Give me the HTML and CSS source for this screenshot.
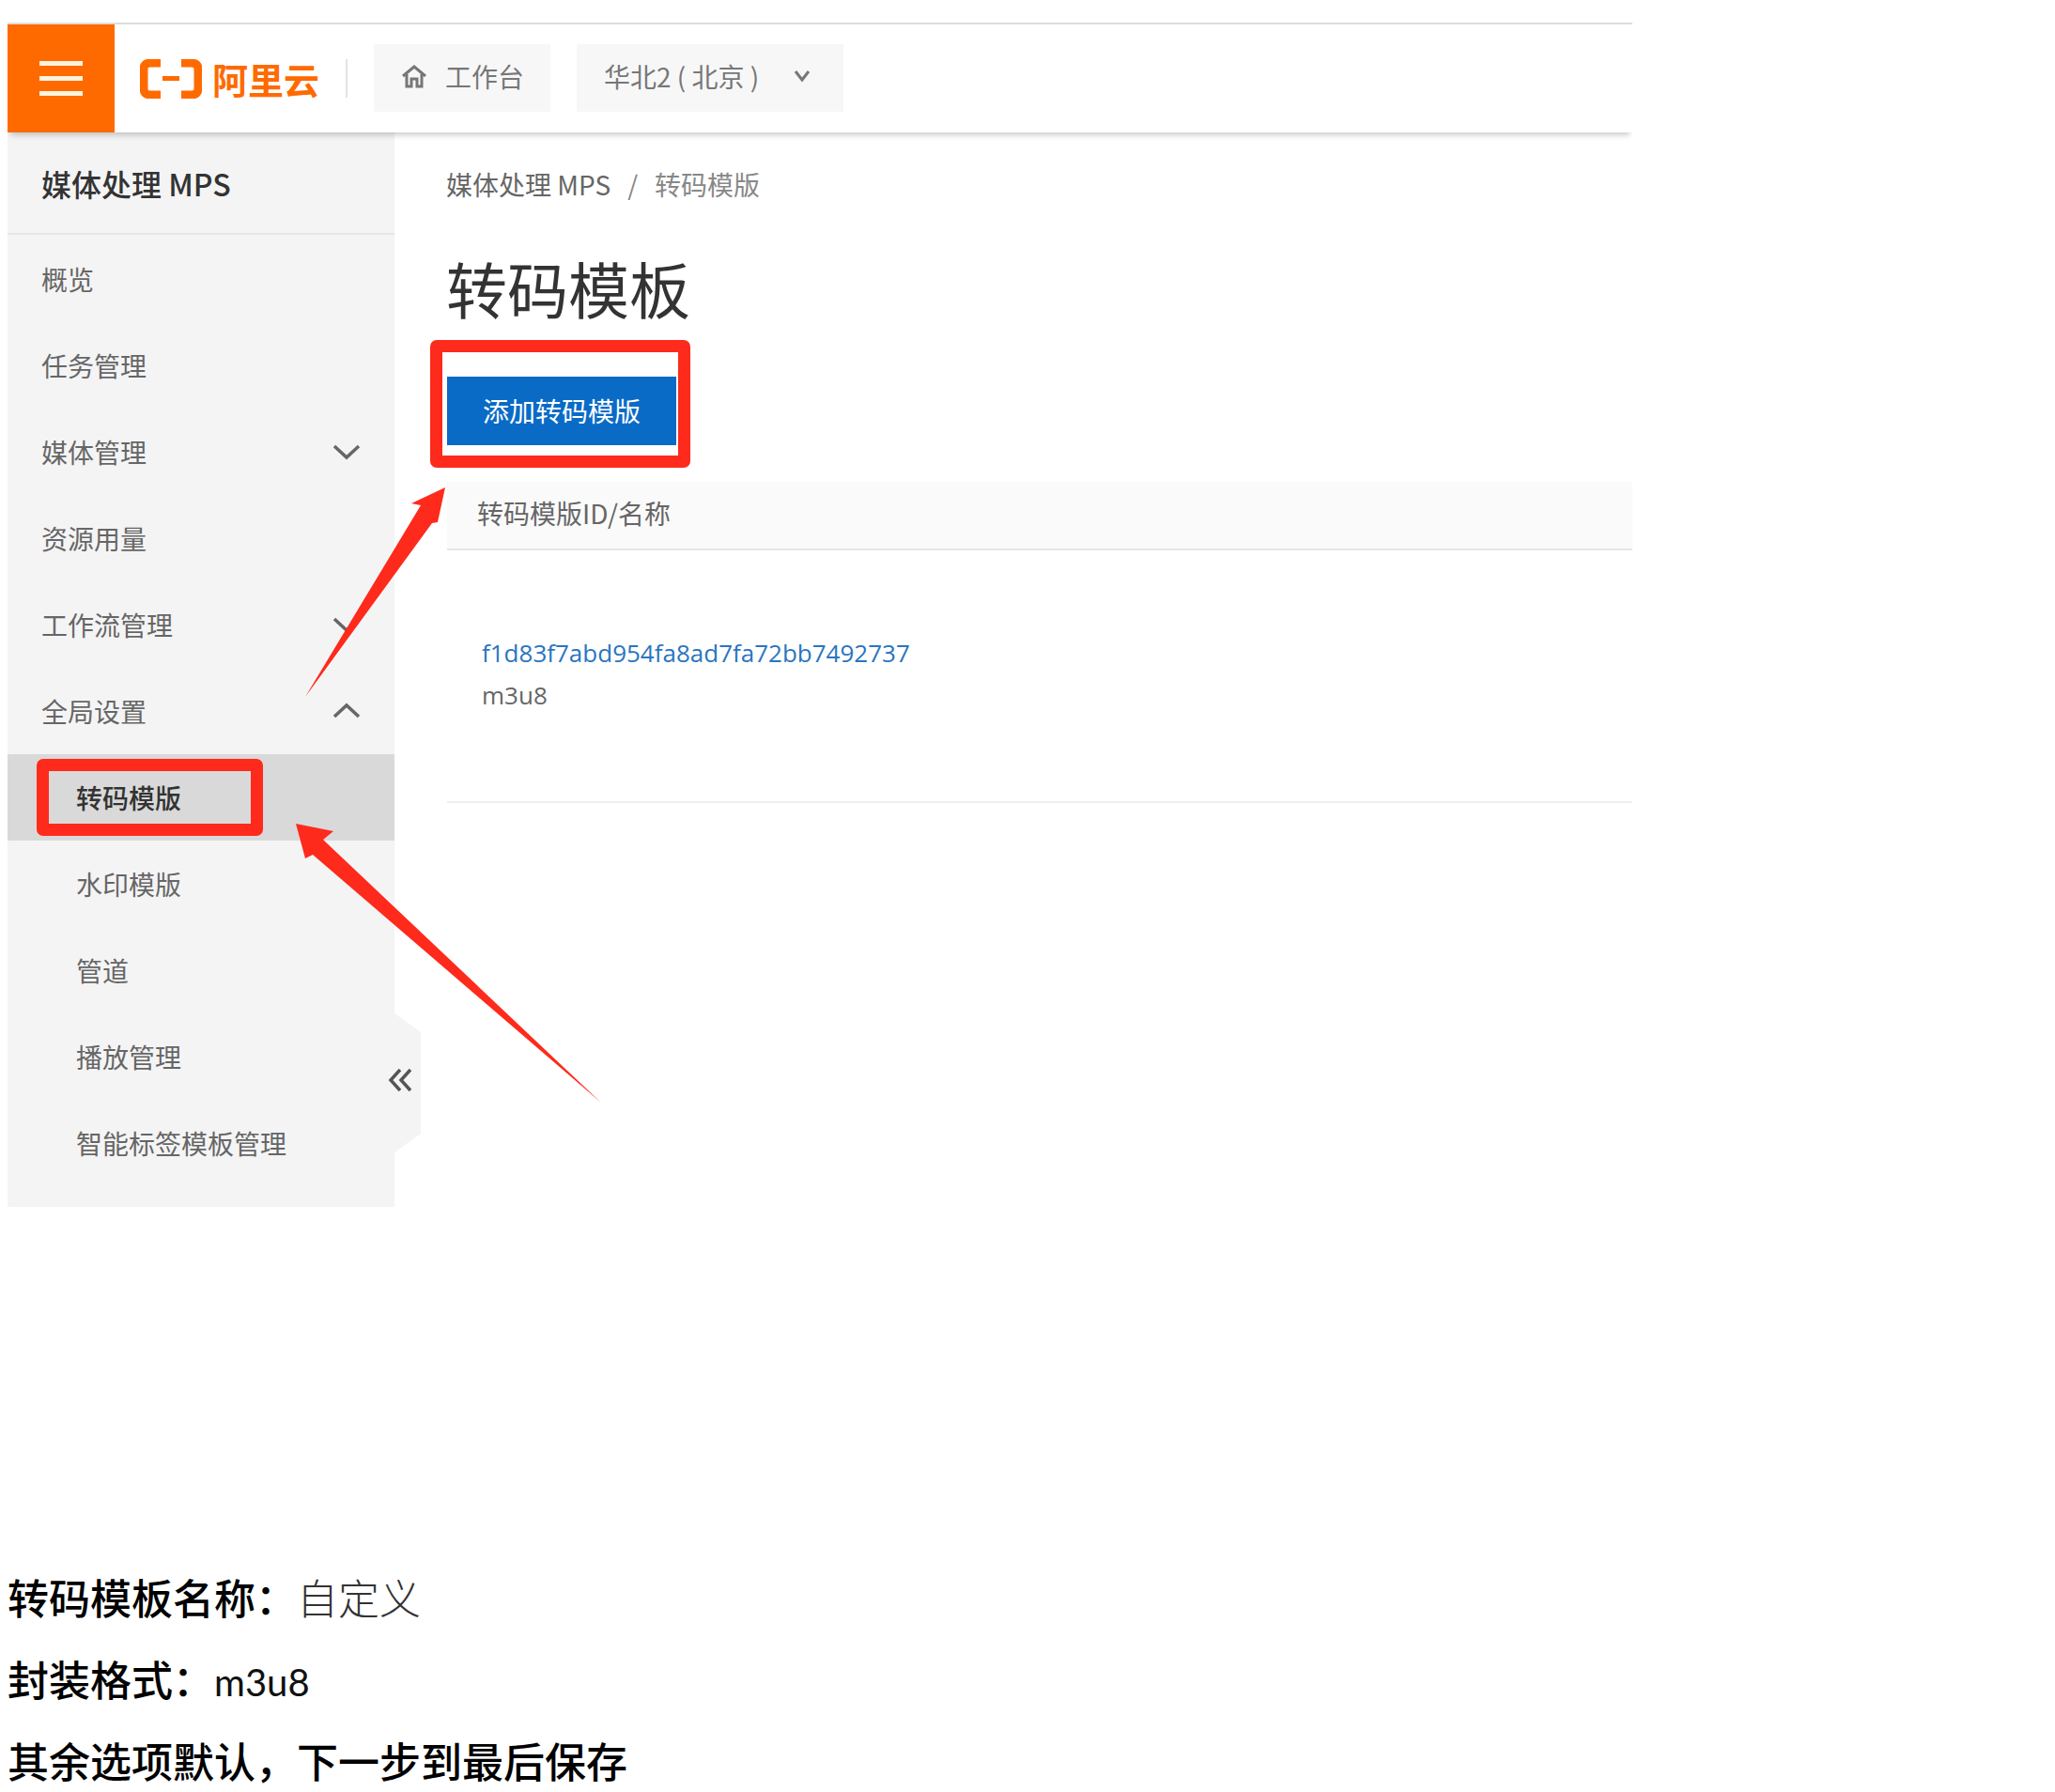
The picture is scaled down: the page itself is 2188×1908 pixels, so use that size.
FILE: index.html
```html
<!DOCTYPE html>
<html lang="zh">
<head>
<meta charset="utf-8">
<title>转码模板</title>
<link rel="stylesheet" href="styles.css">
</head>
<body>
<div class="shot">
  <header class="topbar">
    <div class="burger"><i></i><i></i><i></i></div>
    <div class="logo">
      <svg class="logo-mark" width="66" height="42" viewBox="0 0 66 42"><path d="M22 4H11Q4 4 4 11V31Q4 38 11 38H22M44 4H55Q62 4 62 11V31Q62 38 55 38H44" fill="none" stroke="#ff6a00" stroke-width="9"/><rect x="24" y="18" width="18" height="5" fill="#ff6a00"/></svg>
      <span class="logo-text">阿里云</span>
    </div>
    <div class="divider"></div>
    <div class="chip chip-home">
      <svg width="28" height="26" viewBox="0 0 28 26"><path d="M2 13L14 3L26 13M6 11V24H11V16H17V24H22V11" fill="none" stroke="#777" stroke-width="3"/></svg>
      <span>工作台</span>
    </div>
    <div class="chip chip-region">
      <span>华北2 ( 北京 )</span>
      <svg width="18" height="14" viewBox="0 0 18 14"><path d="M2 2L9 11L16 2" fill="none" stroke="#777" stroke-width="3"/></svg>
    </div>
  </header>
  <div class="body">
    <aside class="side">
      <div class="side-title">媒体处理 MPS</div>
      <nav class="nav">
        <div class="item">概览</div>
        <div class="item">任务管理</div>
        <div class="item">媒体管理<svg class="chev" width="30" height="18" viewBox="0 0 30 18"><path d="M2 3L15 15L28 3"/></svg></div>
        <div class="item">资源用量</div>
        <div class="item">工作流管理<svg class="chev" width="30" height="18" viewBox="0 0 30 18"><path d="M2 3L15 15L28 3"/></svg></div>
        <div class="item">全局设置<svg class="chev" width="30" height="18" viewBox="0 0 30 18"><path d="M2 15L15 3L28 15"/></svg></div>
        <div class="item sub active">转码模版</div>
        <div class="item sub">水印模版</div>
        <div class="item sub">管道</div>
        <div class="item sub">播放管理</div>
        <div class="item sub">智能标签模板管理</div>
      </nav>
      <div class="collapse">
        <svg width="28" height="148" viewBox="0 0 28 148"><path d="M0 0L28 20V128L0 148Z" fill="#f4f4f5"/></svg>
        <svg class="collapse-icon" width="26" height="26" viewBox="0 0 26 26"><path d="M13 2L3 13L13 24M24 2L14 13L24 24" fill="none" stroke="#555" stroke-width="3.5"/></svg>
      </div>
    </aside>
    <main class="main">
      <div class="crumbs"><span>媒体处理 MPS</span><span class="sep">/</span><span class="crumb-last">转码模版</span></div>
      <h1 class="title">转码模板</h1>
      <button class="add">添加转码模版</button>
      <div class="thead">转码模版ID/名称</div>
      <div class="row">
        <a class="tid">f1d83f7abd954fa8ad7fa72bb7492737</a>
        <div class="tname">m3u8</div>
      </div>
    </main>
  </div>
  <div class="mark mark-add"></div>
  <div class="mark mark-nav"></div>
  <svg class="arrows" width="1730" height="1261" viewBox="0 0 1730 1261">
    <polygon points="307,851 347,859 336,868 632,1148 325,884 317,888" fill="#fe2a1c"/>
    <polygon points="466,493 430,510 440,512 317,716 452,531 458,530" fill="#fe2a1c"/>
  </svg>
</div>
<section class="doc">
  <p class="line"><b>转码模板名称：</b><span class="thin">自定义</span></p>
  <p class="line"><b>封装格式：</b><span class="plain">m3u8</span></p>
  <p class="line"><b>其余选项默认，下一步到最后保存</b></p>
</section>
</body>
</html>
```
FILE: styles.css
```css
* { box-sizing: border-box; }
html, body { margin: 0; padding: 0; background: #fff; }
body {
  height: 1908px;
  overflow: hidden;
  font-family: "Noto Sans CJK SC", "Open Sans", sans-serif;
  color: #555;
}
.shot {
  position: relative;
  width: 1730px;
  height: 1261px;
  margin: 24px 0 0 8px;
  display: flex;
  flex-direction: column;
  border-top: 2px solid #ddd;
  overflow: hidden;
}
.topbar {
  height: 115px;
  display: flex;
  align-items: center;
  background: #fff;
  box-shadow: 0 6px 6px -3px rgba(0,0,0,.2);
  position: relative;
  z-index: 2;
}
.burger {
  width: 114px;
  height: 115px;
  background: #ff6a00;
  display: flex;
  flex-direction: column;
  justify-content: center;
  gap: 11px;
  padding: 0 34px;
}
.burger i { display: block; height: 5px; background: #fff3dc; }
.logo { display: flex; align-items: center; gap: 11px; margin-left: 27px; }
.logo-text { font-size: 38px; line-height: 42px; font-weight: 700; color: #ff6a00; }
.divider { width: 2px; height: 41px; background: #e4e4e4; margin-left: 28px; }
.chip {
  height: 72px;
  margin-top: -1px;
  padding-bottom: 4px;
  background: #f7f7f8;
  display: flex;
  align-items: center;
  font-size: 28px;
  color: #777;
}
.chip-home { width: 188px; margin-left: 28px; padding-left: 29px; gap: 19px; }
.chip-region { width: 284px; margin-left: 28px; padding-left: 29px; gap: 37px; }
.body { flex: 1; display: flex; min-height: 0; }
.side { width: 412px; background: #f4f4f5; position: relative; }
.side-title {
  height: 109px;
  padding-left: 36px;
  display: flex;
  align-items: center;
  font-size: 32px;
  font-weight: 500;
  color: #333;
  border-bottom: 2px solid #e6e6e6;
}
.nav { padding-top: 1px; }
.item {
  height: 92px;
  padding: 0 36px 1px;
  display: flex;
  align-items: center;
  justify-content: space-between;
  font-size: 28px;
  color: #666;
}
.sub { padding-left: 73px; }
.active { background: #d9d9d9; color: #333; font-weight: 500; }
.chev path { fill: none; stroke: #666; stroke-width: 3.5; }
.collapse { position: absolute; left: 412px; top: 938px; width: 28px; height: 148px; }
.collapse svg { display: block; }
.collapse .collapse-icon { position: absolute; left: -7px; top: 58px; }
.main { flex: 1; min-width: 0; padding-left: 56px; display: flex; flex-direction: column; align-items: stretch; }
.crumbs {
  margin-top: 34px;
  margin-left: -1px;
  height: 42px;
  display: flex;
  align-items: center;
  font-size: 28px;
  color: #666;
}
.sep { margin: 0 18px; color: #888; }
.crumb-last { color: #888; }
.title {
  margin: 45px 0 0;
  margin-left: -1px;
  height: 88px;
  font-size: 65px;
  line-height: 88px;
  font-weight: 400;
  color: #333;
}
.add {
  display: block;
  margin-top: 51px;
  width: 244px;
  height: 73px;
  border: 0;
  padding: 0 0 2px;
  background: #0a6bc6;
  color: #fff;
  font-family: inherit;
  font-size: 28px;
}
.thead {
  margin-top: 39px;
  height: 73px;
  padding: 0 0 6px 32px;
  display: flex;
  align-items: center;
  background: #fafafa;
  border-bottom: 2px solid #e6e6e6;
  font-size: 28px;
  color: #666;
}
.row { height: 269px; padding: 87px 0 0 37px; border-bottom: 2px solid #eee; }
.tid { display: block; height: 45px; line-height: 44px; font-size: 26px; color: #2a75c0; font-family: "Open Sans", sans-serif; }
.tname { height: 44px; line-height: 44px; font-size: 26px; color: #666; font-family: "Open Sans", sans-serif; }
.mark { position: absolute; border: 13px solid #fe2a1c; border-radius: 7px; z-index: 3; }
.mark-add { left: 450px; top: 336px; width: 277px; height: 136px; }
.mark-nav { left: 31px; top: 782px; width: 241px; height: 82px; }
.arrows { position: absolute; left: 0; top: 0; z-index: 3; pointer-events: none; }
.doc { margin: 384px 0 0 8px; display: flex; flex-direction: column; gap: 25px; }
.line { margin: 0; height: 62px; line-height: 62px; font-size: 44px; color: #000; }
.line b { font-weight: 500; }
.thin { font-weight: 300; color: #333; }
.plain { font-size: 40px; font-weight: 400; font-family: "Lato", sans-serif; color: #111; }
```
